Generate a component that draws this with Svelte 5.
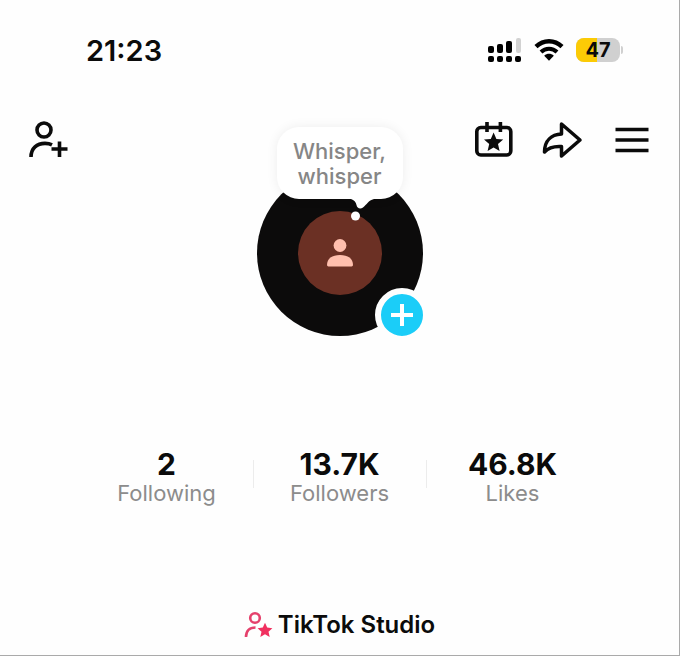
<script>
  let time = '21:23';
  let battery = 47;
  let note = 'Whisper, whisper';

  let stats = [
    { value: '2', label: 'Following' },
    { value: '13.7K', label: 'Followers' },
    { value: '46.8K', label: 'Likes' }
  ];
</script>

<div class="profile">
  <div class="status">
    <span class="time">{time}</span>
    <div class="indicators">
      <svg width="35" height="24" viewBox="0 0 35 24" aria-hidden="true">
        <rect x="1" y="8" width="6" height="7" rx="2" />
        <rect x="10" y="6" width="6" height="9" rx="2" />
        <rect x="19" y="3" width="6" height="12" rx="2" />
        <rect x="29" y="0" width="5" height="15" rx="2" fill="#d2d2d2" />
        <rect x="1" y="18" width="6" height="6" rx="2" />
        <rect x="10" y="18" width="6" height="6" rx="2" />
        <rect x="19" y="18" width="6" height="6" rx="2" />
        <rect x="28" y="18" width="6" height="6" rx="2" />
      </svg>
      <svg width="30" height="24" viewBox="0 0 30 24" aria-hidden="true">
        <path d="M2 8.6C9.4 1.4 20.6 1.4 28 8.6" fill="none" stroke="#000" stroke-width="4.4" />
        <path d="M7 14C11.5 9.6 18.5 9.6 23 14" fill="none" stroke="#000" stroke-width="4" />
        <path d="M10.2 17.8C13 15.2 17 15.2 19.8 17.8L15 22.8Z" />
      </svg>
      <div class="battery">
        <div class="cell">
          <div class="charge" style="width: {battery}%"></div>
          <span>{battery}</span>
        </div>
        <div class="nub"></div>
      </div>
    </div>
  </div>

  <header>
    <button aria-label="Add friends">
      <svg width="40" height="40" viewBox="0 0 40 40" fill="none" stroke="#0b0b0b" stroke-width="3.6">
        <circle cx="15" cy="10" r="7" />
        <path d="M2 37C2 28 8 23.4 16 23.4C19 23.4 21 23.8 23 24.8" />
        <path d="M22.5 29H38.5M30.5 21.5V37" />
      </svg>
    </button>
    <nav>
      <button aria-label="Events">
        <svg width="38" height="40" viewBox="1 0 38 40" fill="none" stroke="#0b0b0b" stroke-width="3.6">
          <rect x="2.8" y="7.5" width="34" height="27.5" rx="4" />
          <path d="M13 2V12M26.4 2V12" />
          <path fill="#0b0b0b" stroke="none" d="M19.6 12.6L22.4 18.9L29.2 19.5L24 24.1L25.6 31L19.6 27.4L13.6 31L15.2 24.1L10 19.5L16.8 18.9Z" />
        </svg>
      </button>
      <button aria-label="Share">
        <svg width="42" height="40" viewBox="2 0 42 40" fill="none" stroke="#0b0b0b" stroke-width="3.5" stroke-linejoin="round">
          <path d="M20.5 4L39 20L20.5 36V26.5C13 26 7.5 27.5 3.5 32C3.5 20.5 10.5 14.5 20.5 14Z" />
        </svg>
      </button>
      <button aria-label="Menu">
        <svg width="34" height="40" viewBox="0 0 34 40" fill="none" stroke="#0b0b0b" stroke-width="3.4">
          <path d="M0.5 9.5H33.5M0.5 20H33.5M0.5 30.5H33.5" />
        </svg>
      </button>
    </nav>
  </header>

  <div class="avatar">
    <div class="label">
      <svg width="28" height="28" viewBox="0 0 28 28" fill="#ffbfae" aria-hidden="true">
        <circle cx="14" cy="6.5" r="6.4" />
        <path d="M1 26C1 19.5 6 16 14 16C22 16 27 19.5 27 26Q27 27.4 25.6 27.4H2.4Q1 27.4 1 26Z" />
      </svg>
    </div>
    <div class="bubble">
      {note}
      <svg class="tail" width="28" height="24" viewBox="0 0 28 24" fill="#fff" aria-hidden="true">
        <path d="M0 0C3 1 5 3 5.5 6C6 9 9 10.5 12 8.5C16 5.5 17 1.5 23 0Z" />
        <circle cx="4.5" cy="17" r="4.5" />
      </svg>
    </div>
    <button class="add" aria-label="Add story">
      <svg width="24" height="24" viewBox="0 0 24 24" stroke="#fff" stroke-width="4">
        <path d="M1 12H23M12 1V23" />
      </svg>
    </button>
  </div>

  <div class="stats">
    {#each stats as stat}
      <div class="stat">
        <strong>{stat.value}</strong>
        <span>{stat.label}</span>
      </div>
    {/each}
  </div>

  <button class="studio">
    <svg width="28" height="28" viewBox="0 0 28 28" fill="none" stroke="#e5416c" stroke-width="2.6" aria-hidden="true">
      <circle cx="11" cy="7" r="4.8" />
      <path d="M2 26C2 19.5 5.5 16.5 11.5 16.5" />
      <path fill="#f0305f" stroke="none" d="M21 11.8L23.2 16.6L28.4 17.2L24.5 20.7L25.7 26L21 23.3L16.3 26L17.5 20.7L13.6 17.2L18.8 16.6Z" />
    </svg>
    TikTok Studio
  </button>
</div>

<style>
  :global(body) {
    margin: 0;
    background: #fefefe;
  }

  .profile {
    box-sizing: border-box;
    min-height: 100vh;
    padding: 32px 0 12px;
    border-right: 1px solid #aaa;
    border-bottom: 1px solid #aaa;
    font-family: Inter, 'Liberation Sans', sans-serif;
    color: #0b0b0b;
  }

  button {
    display: flex;
    align-items: center;
    padding: 0;
    border: 0;
    background: none;
    color: inherit;
    font-family: inherit;
    cursor: pointer;
  }

  svg {
    display: block;
    overflow: visible;
  }

  .status {
    display: flex;
    align-items: center;
    justify-content: space-between;
    height: 36px;
    padding: 0 56px 0 86px;
  }

  .time {
    font-size: 29px;
    font-weight: 600;
  }

  .indicators {
    display: flex;
    align-items: center;
    gap: 12px;
  }

  .battery {
    display: flex;
    align-items: center;
    gap: 1px;
  }

  .cell {
    position: relative;
    display: flex;
    align-items: center;
    justify-content: center;
    width: 44px;
    height: 24px;
    border-radius: 8px;
    overflow: hidden;
    background: #d0d0d0;
    font-size: 20px;
    font-weight: 700;
  }

  .charge {
    position: absolute;
    top: 0;
    bottom: 0;
    left: 0;
    background: #fccb05;
  }

  .cell span {
    position: relative;
  }

  .nub {
    width: 2px;
    height: 8px;
    border-radius: 0 2px 2px 0;
    background: #d0d0d0;
  }

  header {
    display: flex;
    align-items: center;
    justify-content: space-between;
    padding: 52px 30px 10px 29px;
  }

  nav {
    display: flex;
    gap: 30px;
  }

  .avatar {
    position: relative;
    display: flex;
    align-items: center;
    justify-content: center;
    width: 166px;
    height: 166px;
    margin: 0 auto;
    border-radius: 50%;
    background: #0c0b0b;
  }

  .label {
    display: flex;
    align-items: center;
    justify-content: center;
    width: 84px;
    height: 84px;
    border-radius: 50%;
    background: #6b3024;
  }

  .bubble {
    position: absolute;
    bottom: 137px;
    left: 20px;
    right: 20px;
    padding: 12px 12px 10px;
    border-radius: 22px;
    background: #fff;
    box-shadow: 0 0 12px rgba(0, 0, 0, 0.07);
    color: #868686;
    font-size: 22px;
    font-weight: 500;
    line-height: 25px;
    text-align: center;
  }

  .tail {
    position: absolute;
    top: 100%;
    right: 24px;
  }

  .add {
    position: absolute;
    right: -6px;
    bottom: -6px;
    justify-content: center;
    width: 54px;
    height: 54px;
    border: 6px solid #fefefe;
    border-radius: 50%;
    background: #1bcdf8;
  }

  .stats {
    display: flex;
    justify-content: center;
    margin-top: 112px;
  }

  .stat {
    position: relative;
    display: flex;
    flex-direction: column;
    align-items: center;
    width: 173px;
  }

  .stat + .stat::before {
    content: '';
    position: absolute;
    top: 12px;
    left: 0;
    width: 1px;
    height: 28px;
    background: #ececec;
  }

  .stat strong {
    font-size: 30px;
    font-weight: 700;
    line-height: 32px;
  }

  .stat span {
    color: #8c8c8c;
    font-size: 22px;
    line-height: 26px;
  }

  .studio {
    gap: 6px;
    margin: 103px auto 0;
    font-size: 24px;
    font-weight: 600;
    line-height: 32px;
  }
</style>
